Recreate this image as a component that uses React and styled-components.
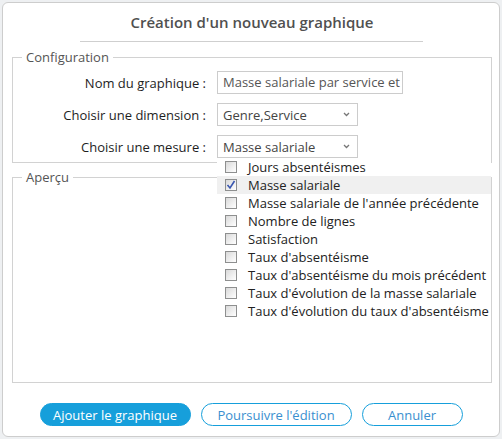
import React from 'react';
import styled, { createGlobalStyle } from 'styled-components';

const GlobalStyle = createGlobalStyle`
  html, body {
    margin: 0;
    padding: 0;
    background: #eef0f2;
  }
  body {
    padding: 2px;
    font-family: "Open Sans", "Liberation Sans", sans-serif;
  }
`;

const Modal = styled.div`
  width: 498px;
  height: 435px;
  box-sizing: border-box;
  border: 1px solid #cdcdcd;
  border-radius: 6px;
  background: #fff;
  padding: 0 7px 0 9px;
  display: flex;
  flex-direction: column;
`;

const Title = styled.h1`
  margin: 9px 0 0;
  font-size: 15px;
  line-height: 20px;
  font-weight: 600;
  color: #505050;
  text-align: center;
`;

const Separator = styled.hr`
  width: 343px;
  margin: 9px 0 0 68px;
  border: 0;
  border-top: 1px solid #cfcfcf;
`;

const Fieldset = styled.fieldset`
  position: relative;
  width: 480px;
  box-sizing: border-box;
  margin: ${(p) => p.$top}px 0 0;
  padding: 5px 8px 4px 9px;
  border: 1px solid #d2d2d2;
  min-width: 0;
  height: ${(p) => (p.$height ? `${p.$height}px` : 'auto')};
`;

const Legend = styled.legend`
  padding: 0 4px;
  font-size: 13px;
  line-height: 18px;
  color: #555;
`;

const Form = styled.div`
  display: grid;
  grid-template-columns: 184px 1fr;
  column-gap: 11px;
  row-gap: 9px;
  align-items: center;
`;

const Label = styled.label`
  font-size: 13px;
  color: #1e1e1e;
  text-align: right;
  white-space: nowrap;
`;

const TextInput = styled.div`
  width: 186px;
  height: 23px;
  box-sizing: border-box;
  border: 1px solid #cccccc;
  padding: 0 5px;
  font-size: 13px;
  line-height: 21px;
  color: #555;
  white-space: nowrap;
  overflow: hidden;
`;

const SelectWrap = styled.div`
  position: relative;
  width: 141px;
`;

const Select = styled.div`
  height: 23px;
  box-sizing: border-box;
  border: 1px solid #cccccc;
  padding: 0 7px 0 5px;
  display: flex;
  align-items: center;
  justify-content: space-between;
  font-size: 13px;
  color: #444;
  background: #fff;
`;

const Popup = styled.ul`
  position: absolute;
  left: 0;
  top: 23px;
  width: 274px;
  margin: 0;
  padding: 0;
  list-style: none;
  background: #fff;
  z-index: 5;
`;

const Item = styled.li`
  height: 18px;
  display: flex;
  align-items: center;
  padding-left: 8px;
  gap: 11px;
  font-size: 13px;
  color: #222;
  background: ${(p) => (p.$active ? '#f0f0f0' : 'transparent')};
  white-space: nowrap;
`;

const Box = styled.span`
  width: 12px;
  height: 12px;
  box-sizing: border-box;
  border: 1px solid #8e8f8f;
  background: linear-gradient(135deg, #d9d9d9 0%, #f4f4f4 70%, #ffffff 100%);
  display: flex;
  align-items: center;
  justify-content: center;
  flex: none;
`;

const Buttons = styled.div`
  display: flex;
  justify-content: center;
  gap: 10px;
  margin-top: 20px;
  padding-right: 2px;
`;

const Button = styled.button`
  width: ${(p) => p.$width}px;
  height: 23px;
  box-sizing: border-box;
  border-radius: 12px;
  border: 1px solid #169fdb;
  background: ${(p) => (p.$primary ? '#169fdb' : '#fff')};
  color: ${(p) => (p.$primary ? '#fff' : '#3a8fcf')};
  font-family: "Open Sans", "Liberation Sans", sans-serif;
  font-size: 13px;
  padding: 0;
  cursor: pointer;
`;

const Chevron = () => (
  <svg width="7" height="5" viewBox="0 0 7 5">
    <path d="M1 1 L3.5 3.5 L6 1" fill="none" stroke="#777" strokeWidth="1.3" />
  </svg>
);

const Check = () => (
  <svg width="10" height="10" viewBox="0 0 10 10">
    <path d="M1.5 5 L4 8 L8.5 1" fill="none" stroke="#3a57b0" strokeWidth="1.6" />
  </svg>
);

const measures = [
  'Jours absentéismes',
  'Masse salariale',
  "Masse salariale de l'année précédente",
  'Nombre de lignes',
  'Satisfaction',
  "Taux d'absentéisme",
  "Taux d'absentéisme du mois précédent",
  "Taux d'évolution de la masse salariale",
  "Taux d'évolution du taux d'absentéisme",
];

const App = () => (
  <>
    <GlobalStyle />
    <Modal>
      <Title>Création d'un nouveau graphique</Title>
      <Separator />

      <Fieldset $top={6}>
        <Legend>Configuration</Legend>
        <Form>
          <Label>Nom du graphique :</Label>
          <TextInput>Masse salariale par service et</TextInput>

          <Label>Choisir une dimension :</Label>
          <SelectWrap>
            <Select>
              Genre,Service
              <Chevron />
            </Select>
          </SelectWrap>

          <Label>Choisir une mesure :</Label>
          <SelectWrap>
            <Select>
              Masse salariale
              <Chevron />
            </Select>
            <Popup>
              {measures.map((m) => (
                <Item key={m} $active={m === 'Masse salariale'}>
                  <Box>{m === 'Masse salariale' && <Check />}</Box>
                  {m}
                </Item>
              ))}
            </Popup>
          </SelectWrap>
        </Form>
      </Fieldset>

      <Fieldset $top={5} $height={215}>
        <Legend>Aperçu</Legend>
      </Fieldset>

      <Buttons>
        <Button $primary $width={151}>Ajouter le graphique</Button>
        <Button $width={151}>Poursuivre l'édition</Button>
        <Button $width={101}>Annuler</Button>
      </Buttons>
    </Modal>
  </>
);

export default App;
